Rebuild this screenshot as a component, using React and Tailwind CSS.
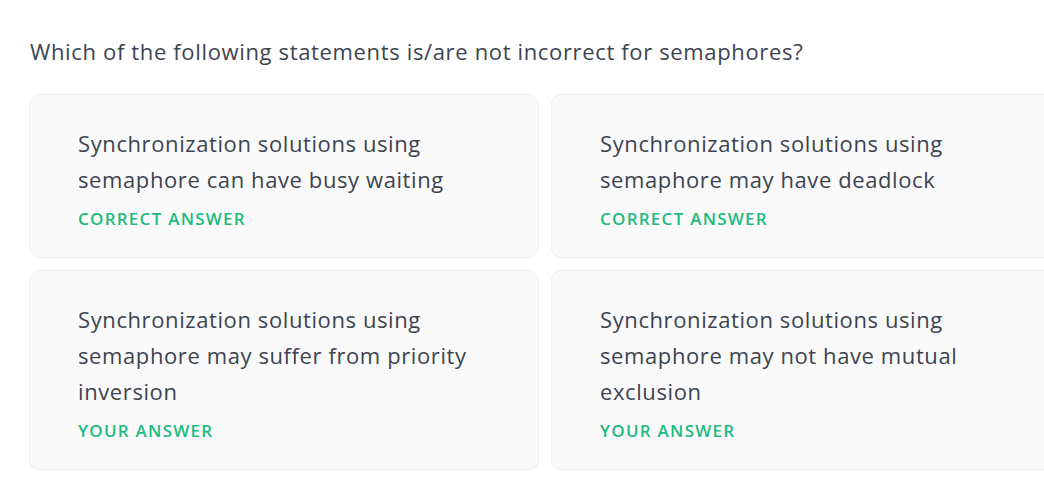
export default function App() {
  const cards = [
    { text: "Synchronization solutions using semaphore can have busy waiting", label: "CORRECT ANSWER" },
    { text: "Synchronization solutions using semaphore may have deadlock", label: "CORRECT ANSWER" },
    { text: "Synchronization solutions using semaphore may suffer from priority inversion", label: "YOUR ANSWER" },
    { text: "Synchronization solutions using semaphore may not have mutual exclusion", label: "YOUR ANSWER" },
  ];
  return (
    <div className="w-[1044px] h-[490px] overflow-hidden bg-white font-['Open_Sans',sans-serif] text-[#3d4450]">
      <div className="pl-[29px] pt-[35px]">
        <h1 className="pl-px text-[22px] leading-8 tracking-[0.65px] mb-[27px]">
          Which of the following statements is/are not incorrect for semaphores?
        </h1>
        <div className="grid grid-cols-[510px_510px] gap-3 w-[1032px]">
          {cards.map((c, i) => (
            <div key={i} className="rounded-[10px] border border-[#f0f0f0] bg-[#fafafa] pl-12 pr-12 pt-[30px] pb-[26px]">
              <p className="text-[22px] leading-9 tracking-[0.6px] pr-2">{c.text}</p>
              <p className="mt-[10px] text-[17px] leading-6 font-semibold tracking-[1.25px] text-[#1dbb7f]">{c.label}</p>
            </div>
          ))}
        </div>
      </div>
    </div>
  );
}
